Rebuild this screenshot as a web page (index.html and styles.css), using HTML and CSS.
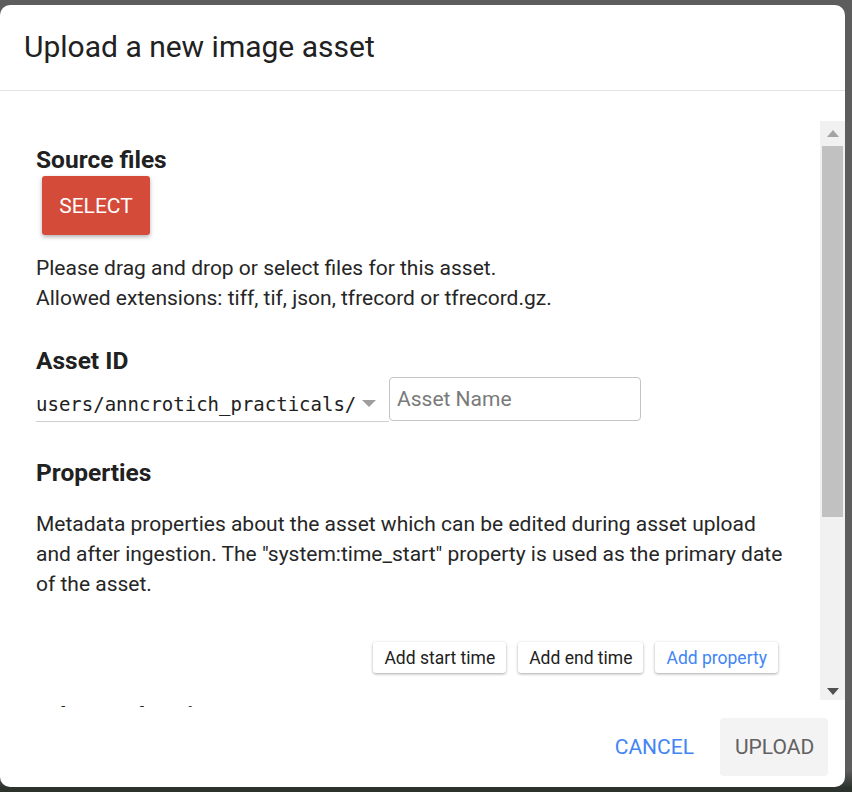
FILE: index.html
```html
<!DOCTYPE html>
<html>
<head>
<meta charset="utf-8">
<title>Upload a new image asset</title>
<link rel="stylesheet" href="styles.css">
</head>
<body>
<div class="dialog">
  <header class="dlg-head">
    <h1 class="dlg-title">Upload a new image asset</h1>
  </header>
  <div class="dlg-body">
    <div class="content">
      <h2 class="section-title first">Source files</h2>
      <button class="select-btn">SELECT</button>
      <p class="text t-files">Please drag and drop or select files for this asset.<br>Allowed extensions: tiff, tif, json, tfrecord or tfrecord.gz.</p>

      <h2 class="section-title asset-title">Asset ID</h2>
      <div class="asset-row">
        <div class="folder-select">
          <span class="folder-text">users/anncrotich_practicals/</span>
          <span class="caret"></span>
        </div>
        <div class="name-input"><span class="placeholder">Asset Name</span></div>
      </div>

      <h2 class="section-title props-title">Properties</h2>
      <p class="text t-props">Metadata properties about the asset which can be edited during asset upload and after ingestion. The "system:time_start" property is used as the primary date of the asset.</p>

      <div class="prop-buttons">
        <button class="chip">Add start time</button>
        <button class="chip">Add end time</button>
        <button class="chip blue">Add property</button>
      </div>

      <h2 class="section-title next-title">Advanced options</h2>
    </div>
    <div class="scrollbar">
      <div class="arrow up"></div>
      <div class="track"><div class="thumb"></div></div>
      <div class="arrow down"></div>
    </div>
  </div>
  <footer class="dlg-foot">
    <button class="flat-btn cancel">CANCEL</button>
    <button class="flat-btn upload">UPLOAD</button>
  </footer>
</div>
</body>
</html>
```

FILE: styles.css
```css
html, body {
  margin: 0;
  padding: 0;
}
body {
  width: 852px;
  height: 792px;
  overflow: hidden;
  background: linear-gradient(to bottom, #5d5d5d 0, #5d5d5d 770px, #2c332c 788px, #2c332c 100%);
  font-family: Roboto, "Noto Sans", sans-serif;
  color: #212121;
}
.dialog {
  margin-top: 5px;
  width: 845px;
  height: 782px;
  background: #fff;
  border-radius: 10px;
  display: flex;
  flex-direction: column;
  overflow: hidden;
}
.dlg-head {
  box-sizing: border-box;
  height: 86px;
  border-bottom: 1px solid #e3e3e3;
  padding-left: 24px;
  display: flex;
  align-items: center;
}
.dlg-title {
  margin: 0;
  font-size: 30px;
  font-weight: 400;
  line-height: 34px;
  color: #212121;
  position: relative;
  top: -1px;
}
.dlg-body {
  height: 616px;
  display: flex;
  overflow: hidden;
}
.content {
  flex: 1;
  padding: 55px 29px 0 36px;
  overflow: hidden;
}
.section-title {
  margin: 0;
  font-size: 24.5px;
  font-weight: 700;
  line-height: 28px;
  color: #212121;
}
.select-btn {
  display: block;
  margin: 2px 0 0 6px;
  width: 108px;
  height: 59px;
  border: none;
  border-radius: 3px;
  background: #d44b3a;
  color: #fff;
  font-family: Roboto, sans-serif;
  font-size: 21px;
  font-weight: 400;
  box-shadow: 0 2px 4px rgba(0,0,0,0.3);
  padding: 0;
}
.text {
  margin: 0;
  font-size: 21px;
  line-height: 30px;
  color: #262626;
}
.t-files { margin-top: 18px; }
.asset-title { margin-top: 34px; }
.asset-row {
  margin-top: 2px;
  display: flex;
  align-items: flex-end;
}
.folder-select {
  width: 353px;
  height: 44px;
  box-sizing: border-box;
  border-bottom: 1px solid #cfcfcf;
  display: flex;
  align-items: flex-end;
  padding-bottom: 6px;
}
.folder-text {
  font-family: "DejaVu Sans Mono", "Liberation Mono", monospace;
  font-size: 19px;
  line-height: 22px;
  color: #212121;
}
.caret {
  width: 0;
  height: 0;
  border-left: 7px solid transparent;
  border-right: 7px solid transparent;
  border-top: 7px solid #9e9e9e;
  margin-left: 6px;
  margin-bottom: 8px;
}
.name-input {
  width: 252px;
  height: 44px;
  box-sizing: border-box;
  border: 1px solid #c4c4c4;
  border-radius: 4px;
  display: flex;
  align-items: center;
  padding-left: 7px;
  margin-bottom: 1px;
}
.placeholder {
  font-size: 21px;
  color: #7a7a7a;
}
.props-title { margin-top: 37px; }
.t-props { margin-top: 22px; }
.prop-buttons {
  margin-top: 43px;
  display: flex;
  justify-content: flex-end;
  gap: 12px;
  padding-right: 13px;
}
.chip {
  height: 31px;
  border: none;
  border-radius: 3px;
  background: #fff;
  box-shadow: 0 1px 3px rgba(0,0,0,0.35);
  font-family: Roboto, sans-serif;
  font-size: 17.5px;
  color: #212121;
  padding: 0 11px;
}
.chip.blue { color: #4285f4; }
.next-title { margin-top: 29px; }

.scrollbar {
  width: 25px;
  margin: 30px 0 7px 0;
  background: #f1f1f1;
  display: flex;
  flex-direction: column;
  align-items: center;
}
.arrow {
  width: 0;
  height: 0;
  border-left: 6px solid transparent;
  border-right: 6px solid transparent;
}
.arrow.up {
  border-bottom: 7px solid #a3a3a3;
  margin-top: 9px;
}
.arrow.down {
  border-top: 7px solid #505050;
  margin-bottom: 5px;
}
.track {
  flex: 1;
  width: 100%;
  padding-top: 9px;
  box-sizing: border-box;
  display: flex;
  justify-content: center;
}
.thumb {
  width: 21px;
  height: 371px;
  background: #c1c1c1;
}
.dlg-foot {
  flex: 1;
  display: flex;
  justify-content: flex-end;
  align-items: center;
  padding-right: 17px;
  gap: 11px;
}
.flat-btn {
  height: 58px;
  border: none;
  border-radius: 4px;
  font-family: Roboto, sans-serif;
  font-size: 21px;
  padding: 0 15px;
  background: transparent;
}
.cancel { color: #4285f4; }
.upload {
  background: #f3f3f3;
  color: #616161;
  width: 108px;
}
```
